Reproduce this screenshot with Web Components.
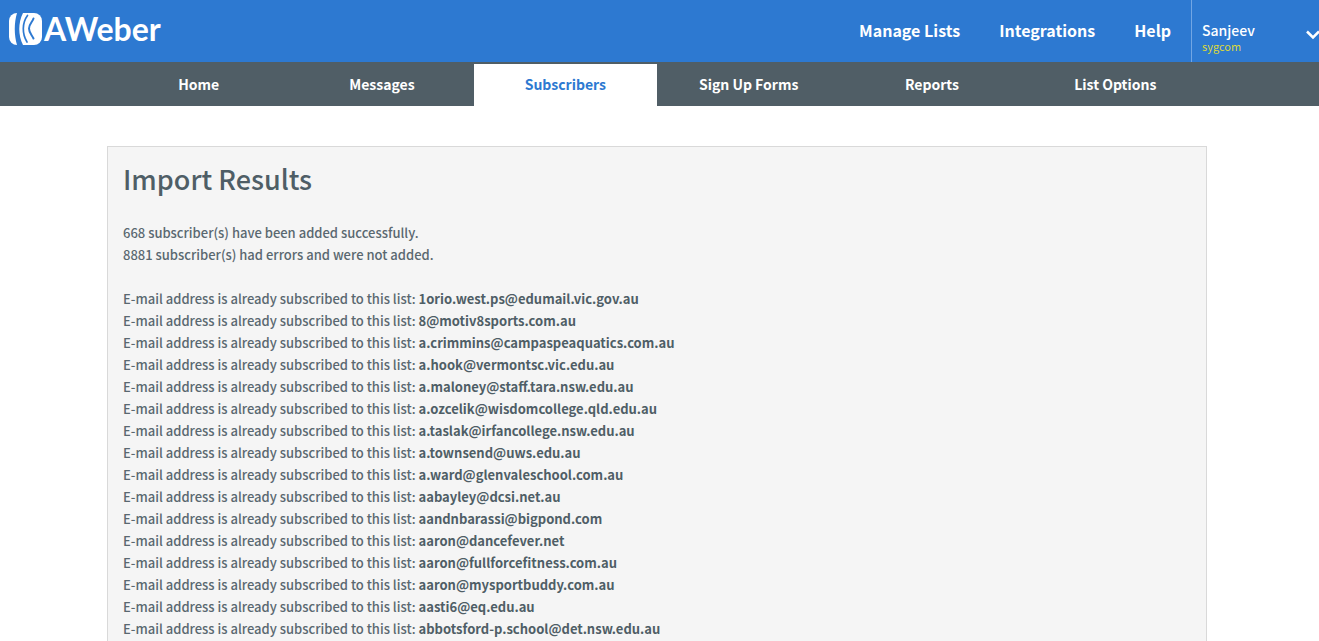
<!DOCTYPE html>
<html lang="en">
<head>
<meta charset="utf-8">
<title>AWeber - Import Results</title>
<style>
  body { margin: 0; background: #fff; color: #4f5e66; font: 13px/22px "Noto Sans CJK SC", "Noto Sans", sans-serif; }
</style>
</head>
<body>
<aw-page>
  <aw-header slot="header">
    <aw-link href="#lists">Manage Lists</aw-link>
    <aw-link href="#integrations">Integrations</aw-link>
    <aw-link href="#help">Help</aw-link>
    <aw-user slot="user" name="Sanjeev" account="sygcom"></aw-user>
  </aw-header>
  <aw-tabs slot="tabs">
    <aw-tab href="#home">Home</aw-tab>
    <aw-tab href="#messages">Messages</aw-tab>
    <aw-tab href="#subscribers" active>Subscribers</aw-tab>
    <aw-tab href="#forms">Sign Up Forms</aw-tab>
    <aw-tab href="#reports">Reports</aw-tab>
    <aw-tab href="#options">List Options</aw-tab>
  </aw-tabs>
  <aw-panel heading="Import Results">
    <aw-summary added="668" failed="8881"></aw-summary>
    <aw-errors></aw-errors>
  </aw-panel>
</aw-page>

<script>
const define = (name, render) => customElements.define(name, class extends HTMLElement {
  connectedCallback() {
    if (this.shadowRoot) return;
    const template = document.createElement('template');
    template.innerHTML = render(this);
    this.attachShadow({ mode: 'open' }).append(template.content.cloneNode(true));
  }
});

define('aw-page', () => `
  <style>
    :host { display: flex; flex-direction: column; min-height: 100vh; }
    main { flex: 1; display: flex; justify-content: center; padding: 40px 5px 0 0; }
    ::slotted(aw-panel) { width: 100%; max-width: 1100px; }
  </style>
  <slot name="header"></slot><slot name="tabs"></slot><main><slot></slot></main>`);

define('aw-header', () => `
  <style>
    :host { display: block; background: #2d79d1; color: #fff; overflow: hidden; }
    header { display: flex; height: 62px; }
    nav { display: flex; gap: 39px; align-items: center; margin-left: auto; padding: 0 20px 2px 0; }
  </style>
  <header><aw-logo></aw-logo><nav aria-label="Account"><slot></slot></nav><slot name="user"></slot></header>`);

define('aw-logo', () => `
  <style>
    :host { display: block; }
    a { display: flex; gap: 2px; align-items: center; height: 58px; padding-left: 9px; color: #fff; text-decoration: none; font: 700 32px/58px Lato, sans-serif; }
  </style>
  <a href="#aweber"><svg width="33" height="32" viewBox="0 0 33 32" aria-hidden="true">
    <rect width="33" height="32" rx="8" fill="#fff"/>
    <path d="M8 0H14C9 10 9 22 14 32H8C5 22 5 10 8 0Z" fill="#2d79d1"/>
    <g fill="none" stroke="#2d79d1" stroke-linecap="round">
      <path d="M18.5 2.5C13 10 13 21 18 29" stroke-width="1.7"/>
      <path d="M24.5 5.5C23.5 9 20 11 20 15.500S23 22 24.500 25.500" stroke-width="2"/>
    </g></svg><span>AWeber</span></a>`);

define('aw-link', el => `
  <style>
    :host { display: block; }
    a { color: inherit; text-decoration: none; font-size: 16px; line-height: 24px; font-weight: 700; }
  </style>
  <a href="${el.getAttribute('href')}"><slot></slot></a>`);

define('aw-user', el => `
  <style>
    :host { display: block; flex: none; width: 127px; border-left: 1px solid #72a6e4; }
    button { display: flex; justify-content: space-between; align-items: center; width: 129px; height: 62px; padding: 8px 0 0 10px; border: 0; background: none; color: #fff; font: inherit; text-align: left; }
    span, small { display: block; }
    div { padding-top: 4px; }
    span { font-size: 14px; line-height: 18px; font-weight: 500; }
    small { font-size: 11px; line-height: 14px; font-weight: 400; color: #dcd83a; }
  </style>
  <button type="button" aria-haspopup="true">
    <div><span>${el.getAttribute('name')}</span><small>${el.getAttribute('account')}</small></div>
    <svg width="16" height="10" viewBox="0 0 16 10" fill="none" stroke="#fff" stroke-width="2.5" aria-hidden="true"><path d="M2 1.5L8 7.5L14 1.5"/></svg>
  </button>`);

define('aw-tabs', () => `
  <style>
    :host { display: block; background: #505e66; color: #fff; }
    .bar { display: flex; justify-content: center; padding: 2px 5px 0 0; }
    nav { display: grid; grid-template-columns: repeat(6, 1fr); width: 100%; max-width: 1100px; }
  </style>
  <div class="bar"><nav aria-label="Main"><slot></slot></nav></div>`);

define('aw-tab', el => `
  <style>
    :host { display: block; }
    a { display: block; padding-bottom: 2px; color: inherit; text-decoration: none; text-align: center; font-size: 14px; line-height: 40px; font-weight: 700; }
    :host([active]) a { background: #fff; color: #2d79d1; }
  </style>
  <a href="${el.getAttribute('href')}"${el.hasAttribute('active') ? ' aria-current="page"' : ''}><slot></slot></a>`);

define('aw-panel', el => `
  <style>
    :host { display: block; box-sizing: border-box; padding: 14px 15px 0; border: 1px solid #d9d9d9; border-bottom: 0; background: #f5f5f5; }
    h1 { margin: 0 0 25px; font-size: 27px; line-height: 36px; font-weight: 500; }
  </style>
  <h1>${el.getAttribute('heading')}</h1><slot></slot>`);

define('aw-summary', el => `
  <style>
    :host { display: block; margin-bottom: 22px; color: #5a6870; font-weight: 500; }
    p { margin: 0; }
  </style>
  <p>${el.getAttribute('added')} subscriber(s) have been added successfully.</p>
  <p>${el.getAttribute('failed')} subscriber(s) had errors and were not added.</p>`);

const addresses = [
  '1orio.west.ps@edumail.vic.gov.au', '8@motiv8sports.com.au', 'a.crimmins@campaspeaquatics.com.au',
  'a.hook@vermontsc.vic.edu.au', 'a.maloney@staff.tara.nsw.edu.au', 'a.ozcelik@wisdomcollege.qld.edu.au',
  'a.taslak@irfancollege.nsw.edu.au', 'a.townsend@uws.edu.au', 'a.ward@glenvaleschool.com.au',
  'aabayley@dcsi.net.au', 'aandnbarassi@bigpond.com', 'aaron@dancefever.net',
  'aaron@fullforcefitness.com.au', 'aaron@mysportbuddy.com.au', 'aasti6@eq.edu.au',
  'abbotsford-p.school@det.nsw.edu.au'
];
define('aw-errors', () => `
  <style>
    :host { display: block; color: #5a6870; font-weight: 500; }
    ul { margin: 0; padding: 0; list-style: none; }
    b { color: #4f5e66; font-weight: 700; }
  </style>
  <ul>${addresses.map(a => `<li>E-mail address is already subscribed to this list: <b>${a}</b></li>`).join('')}</ul>`);
</script>
</body>
</html>
